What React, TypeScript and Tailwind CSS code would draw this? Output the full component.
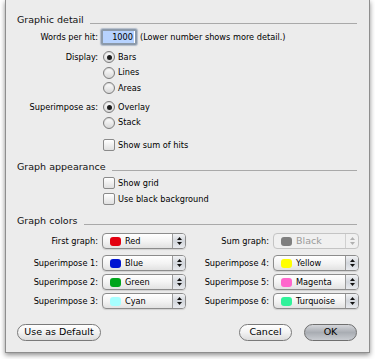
import React from "react";

const font = "font-['DejaVu_Sans',sans-serif]";

function Heading({ title }: { title: string }) {
    return (
        <div className="flex h-[14px] items-center pl-[11px] pr-[12px]">
            <span className="text-[9.5px] text-[#111] whitespace-nowrap">{title}</span>
            <div className="ml-[6px] mt-[7px] h-px flex-1 bg-[#a9a9a9]" />
        </div>
    );
}

function Label({ text, w = "w-[92px]" }: { text: string; w?: string }) {
    return <div className={`${w} shrink-0 text-right text-[8.2px] text-[#000] whitespace-nowrap`}>{text}</div>;
}

function Radio({ checked }: { checked?: boolean }) {
    return (
        <div className="ml-[5px] flex h-[12px] w-[12px] shrink-0 items-center justify-center rounded-full border border-[#7c7c7c] bg-gradient-to-b from-[#ffffff] to-[#d8d8d8] shadow-[inset_0_1px_1px_rgba(0,0,0,0.15)]">
            {checked && <div className="h-[5px] w-[5px] rounded-full bg-[#1c1c1c]" />}
        </div>
    );
}

function Check() {
    return (
        <div className="ml-[5px] h-[12px] w-[12px] shrink-0 rounded-[2px] border border-[#8a8a8a] bg-gradient-to-b from-[#ffffff] to-[#e0e0e0]" />
    );
}

function OptionRow({ label, control, text, h = "h-[16px]", mt = "" }: { label?: string; control: React.ReactNode; text: string; h?: string; mt?: string }) {
    return (
        <div className={`flex ${h} ${mt} items-center`}>
            <Label text={label ?? ""} />
            {control}
            <span className="ml-[3px] text-[8.2px] text-[#000]">{text}</span>
        </div>
    );
}

function Stepper({ disabled }: { disabled?: boolean }) {
    const c = disabled ? "#b0b0b0" : "#111";
    return (
        <div className={`flex w-[13px] shrink-0 flex-col items-center justify-center gap-[2px] border-l ${disabled ? "border-[#d0d0d0]" : "border-[#9a9a9a] bg-gradient-to-b from-[#f2f3f5] via-[#d2d6dc] to-[#e8eaee]"}`}>
            <svg width="5" height="3" viewBox="0 0 5 3"><path d="M0 3 L2.5 0 L5 3 Z" fill={c} /></svg>
            <svg width="5" height="3" viewBox="0 0 5 3"><path d="M0 0 L2.5 3 L5 0 Z" fill={c} /></svg>
        </div>
    );
}

function Popup({ color, name, w, disabled }: { color: string; name: string; w: string; disabled?: boolean }) {
    return (
        <div className={`ml-[4px] flex h-[16px] ${w} shrink-0 overflow-hidden rounded-[4px] border ${disabled ? "border-[#c4c4c4] bg-[#f0f0f0]" : "border-[#8c8c8c] bg-gradient-to-b from-[#ffffff] via-[#f4f4f4] to-[#e2e2e2] shadow-[0_1px_1px_rgba(0,0,0,0.12)]"}`}>
            <div className="flex flex-1 items-center pl-[7px]">
                <div className="h-[9px] w-[11px] rounded-[3px]" style={{ backgroundColor: color }} />
                <span className={`ml-[4px] ${disabled ? "text-[9.5px] text-[#9a9a9a]" : "text-[8.2px] text-[#000]"}`}>{name}</span>
            </div>
            <Stepper disabled={disabled} />
        </div>
    );
}

function ColorRow({ l, lc, ln, r, rc, rn, mt, rDisabled }: { l: string; lc: string; ln: string; r: string; rc: string; rn: string; mt: string; rDisabled?: boolean }) {
    return (
        <div className={`flex h-[16px] ${mt} items-center`}>
            <Label text={l} />
            <Popup color={lc} name={ln} w="w-[84px]" />
            <Label text={r} w="w-[83px]" />
            <Popup color={rc} name={rn} w="w-[86px]" disabled={rDisabled} />
        </div>
    );
}

function PillButton({ children, w, primary }: { children: React.ReactNode; w: string; primary?: boolean }) {
    return (
        <div className={`flex h-[17px] ${w} items-center justify-center rounded-full border text-[9.5px] text-[#000] ${primary ? "border-[#6f6f6f] bg-gradient-to-b from-[#d4d6da] via-[#a9adb3] to-[#c9ccd1]" : "border-[#7a7a7a] bg-gradient-to-b from-[#ffffff] via-[#f2f2f2] to-[#dcdcdc]"}`}>
            {children}
        </div>
    );
}

export default function App() {
    return (
        <div className={`h-[359px] w-[375px] bg-white ${font}`}>
            <div className="ml-[5px] flex w-[365px] flex-col border-x border-b border-[#8e8e8e] bg-[#ececec] pb-[11px] shadow-[0_2px_5px_rgba(0,0,0,0.45)]">
                <div className="mt-[13px]">
                    <Heading title="Graphic detail" />
                </div>

                <div className="mt-[2px] flex h-[16px] items-center">
                    <Label text="Words per hit:" />
                    <div className="ml-[3px] flex h-[16px] w-[36px] items-center justify-end rounded-[2px] border-2 border-[#8c9aaa] bg-white pr-[1px] shadow-[0_0_1px_1px_rgba(120,140,170,0.5)]">
                        <span className="bg-[#b7d3ff] pl-[9px] pr-[1px] text-[8.2px] text-[#000]">1000</span>
                    </div>
                    <span className="ml-[3px] text-[8.2px] text-[#000]">(Lower number shows more detail.)</span>
                </div>

                <OptionRow mt="mt-[4px]" label="Display:" control={<Radio checked />} text="Bars" />
                <OptionRow h="h-[15px]" control={<Radio />} text="Lines" />
                <OptionRow control={<Radio />} text="Areas" />
                <OptionRow mt="mt-[3px]" label="Superimpose as:" control={<Radio checked />} text="Overlay" />
                <OptionRow h="h-[15px]" control={<Radio />} text="Stack" />
                <OptionRow mt="mt-[7px]" control={<Check />} text="Show sum of hits" />

                <div className="mt-[7px]">
                    <Heading title="Graph appearance" />
                </div>
                <OptionRow mt="mt-[1px]" control={<Check />} text="Show grid" />
                <OptionRow control={<Check />} text="Use black background" />

                <div className="mt-[7px]">
                    <Heading title="Graph colors" />
                </div>
                <ColorRow mt="mt-[5px]" l="First graph:" lc="#e30010" ln="Red" r="Sum graph:" rc="#7f7f7f" rn="Black" rDisabled />
                <ColorRow mt="mt-[6px]" l="Superimpose 1:" lc="#0014d2" ln="Blue" r="Superimpose 4:" rc="#ffff00" rn="Yellow" />
                <ColorRow mt="mt-[3px]" l="Superimpose 2:" lc="#00a51c" ln="Green" r="Superimpose 5:" rc="#ff66cc" rn="Magenta" />
                <ColorRow mt="mt-[3px]" l="Superimpose 3:" lc="#a6ffff" ln="Cyan" r="Superimpose 6:" rc="#30f29a" rn="Turquoise" />

                <div className="mt-[15px] flex items-center pl-[11px] pr-[12px]">
                    <PillButton w="w-[84px]">Use as Default</PillButton>
                    <div className="flex-1" />
                    <PillButton w="w-[53px]">Cancel</PillButton>
                    <div className="w-[12px]" />
                    <PillButton w="w-[53px]" primary>OK</PillButton>
                </div>
            </div>
        </div>
    );
}
